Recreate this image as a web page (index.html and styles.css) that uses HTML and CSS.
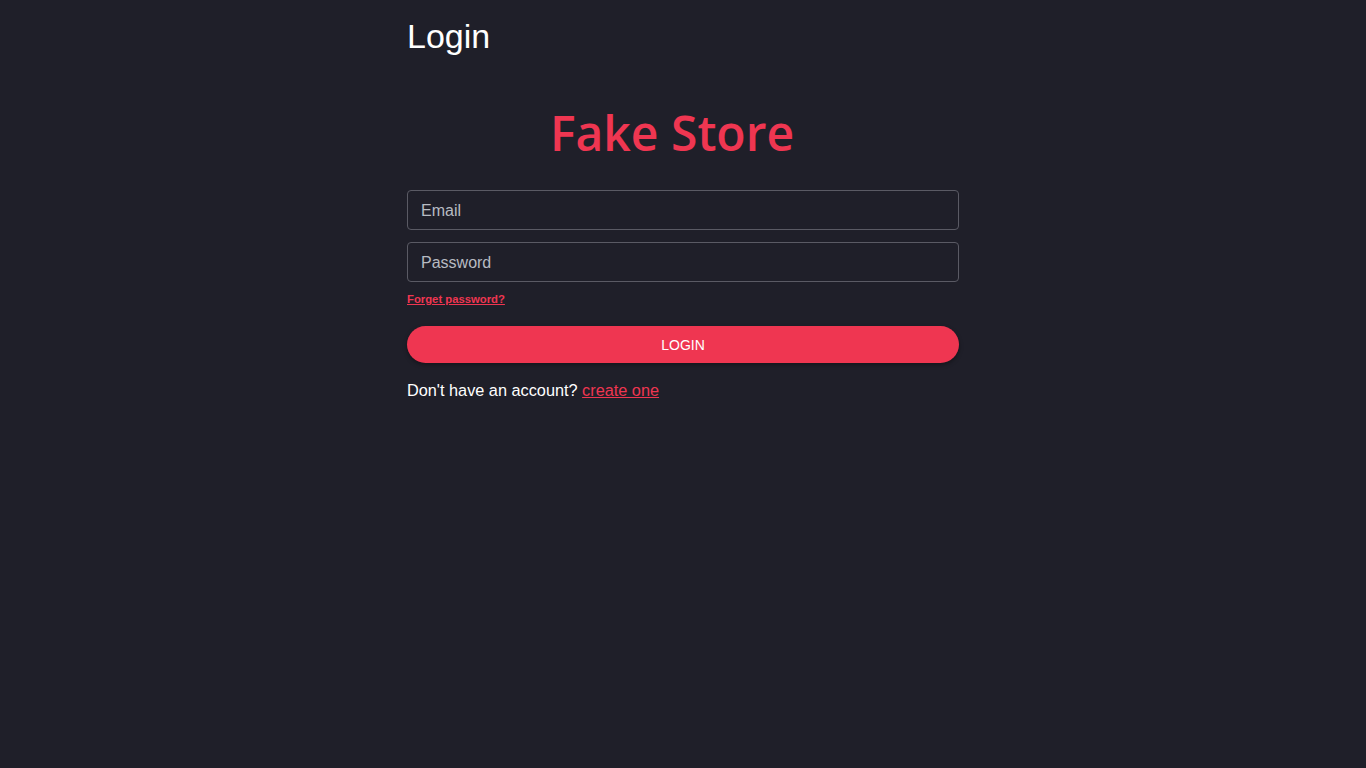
FILE: index.html
```html
<!DOCTYPE html>
<html>
<head>
<meta charset="utf-8">
<link rel="stylesheet" href="styles.css">
</head>
<body>
<div class="page">
  <h1 class="title">Login</h1>
  <div class="brand">Fake Store</div>
  <form class="form">
    <input class="field" type="email" placeholder="Email">
    <input class="field" type="password" placeholder="Password">
    <a class="forgot" href="#">Forget password?</a>
    <button class="btn" type="button">LOGIN</button>
    <p class="signup">Don't have an account? <a href="#">create one</a></p>
  </form>
</div>
</body>
</html>
```
FILE: styles.css
```css
html, body {
  margin: 0;
  padding: 0;
  background: #1f1f29;
  font-family: "Liberation Sans", Arial, sans-serif;
  color: #ffffff;
}
.page {
  width: 552px;
  margin: 0 auto;
  display: flex;
  flex-direction: column;
}
.title {
  margin: 15px 0 0;
  font-size: 34px;
  font-weight: 400;
  line-height: 42px;
}
.brand {
  margin-top: 46px;
  margin-right: 22px;
  text-align: center;
  font-family: "Open Sans", "Noto Sans", sans-serif;
  font-weight: 600;
  font-size: 48px;
  line-height: 60px;
  color: #ef3651;
}
.form {
  margin-top: 27px;
  display: flex;
  flex-direction: column;
}
.field {
  box-sizing: border-box;
  height: 40px;
  width: 100%;
  background: transparent;
  border: 1px solid #5a5a64;
  border-radius: 4px;
  padding: 1px 13px 0;
  font-family: "Liberation Sans", Arial, sans-serif;
  font-size: 16px;
  color: #ffffff;
  margin-bottom: 12px;
  outline: none;
}
.field::placeholder {
  color: #b7bbc2;
}
.forgot {
  align-self: flex-start;
  margin-top: -2px;
  font-size: 11.3px;
  font-weight: 700;
  color: #ef3651;
  text-decoration: underline;
  line-height: 14px;
}
.btn {
  margin-top: 20px;
  height: 37px;
  border: none;
  border-radius: 19px;
  background: #ef3651;
  color: #ffffff;
  font-family: "Liberation Sans", Arial, sans-serif;
  font-size: 14px;
  box-shadow: 0 2px 4px rgba(0,0,0,0.35);
  cursor: pointer;
}
.signup {
  margin: 18px 0 0;
  font-size: 16.3px;
  line-height: 19px;
}
.signup a {
  color: #ef3651;
  text-decoration: underline;
}
```
